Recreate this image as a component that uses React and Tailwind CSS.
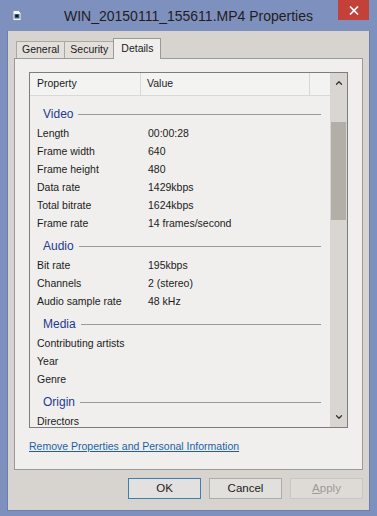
import { ChevronUp, ChevronDown } from "lucide-react";

const groups = [
  {
    name: "Video",
    rows: [
      ["Length", "00:00:28"],
      ["Frame width", "640"],
      ["Frame height", "480"],
      ["Data rate", "1429kbps"],
      ["Total bitrate", "1624kbps"],
      ["Frame rate", "14 frames/second"],
    ],
  },
  {
    name: "Audio",
    rows: [
      ["Bit rate", "195kbps"],
      ["Channels", "2 (stereo)"],
      ["Audio sample rate", "48 kHz"],
    ],
  },
  {
    name: "Media",
    rows: [
      ["Contributing artists", ""],
      ["Year", ""],
      ["Genre", ""],
    ],
  },
  {
    name: "Origin",
    rows: [["Directors", ""]],
  },
];

function FileIcon() {
  return (
    <svg width="10" height="11" viewBox="0 0 10 11">
      <path d="M1 0.5h5.5l2.5 2.5v7.5h-8z" fill="#f4f6f8" stroke="#8a96a8" strokeWidth="1" />
      <rect x="2.5" y="4" width="5" height="4.5" fill="#2b5d8c" />
      <rect x="3.5" y="5" width="2.5" height="2" fill="#111" />
    </svg>
  );
}

function Tab({ label, active }) {
  if (active) {
    return (
      <div className="h-[21px] -mb-px px-[7px] flex items-center bg-[#f0efed] border border-b-0 border-[#9a9a9a] relative z-10">
        {label}
      </div>
    );
  }
  return (
    <div className="h-[17px] px-[5px] flex items-center bg-[#e3e0dc] border border-b-0 border-[#a8a8a8] -mr-px">
      {label}
    </div>
  );
}

function Button({ children, variant }) {
  const cls =
    variant === "default"
      ? "border-[#3c7fb1] bg-[#e2e1df] text-[#1b1b1b]"
      : variant === "disabled"
      ? "border-[#c8c6c3] bg-[#dedbd7] text-[#9c9a97]"
      : "border-[#acacac] bg-[#e2e0dd] text-[#1b1b1b]";
  return (
    <div className={`w-[73px] h-[21px] border flex items-center justify-center text-[11.5px] ${cls}`}>
      {children}
    </div>
  );
}

export default function App() {
  return (
    <div
      className="w-[377px] h-[516px] bg-[#7e90bd] flex flex-col text-[10.5px] text-[#1b1b1b]"
      style={{ fontFamily: '"Liberation Sans", Arial, sans-serif' }}
    >
      {/* title bar */}
      <div className="h-[31px] flex relative">
        <div className="pl-[12px] pt-[10px]">
          <FileIcon />
        </div>
        <div className="absolute left-0 right-0 top-[6px] text-center text-[14px] text-[#1e1e1e]">
          WIN_20150111_155611.MP4 Properties
        </div>
        <div className="ml-auto mr-[8px] w-[31px] h-[20px] bg-[#c4413a] flex items-center justify-center text-white relative z-10">
          <svg width="10" height="9" viewBox="0 0 10 9">
            <path d="M1 0.5l8 8M9 0.5l-8 8" stroke="#fff" strokeWidth="1.7" />
          </svg>
        </div>
      </div>

      {/* client area */}
      <div className="flex-1 mx-[7px] mb-[5px] bg-[#d7d4d0] border-l border-r border-b border-[#6d7ea8] flex flex-col pt-[6px] px-[6px]">
        {/* tabs */}
        <div className="flex items-end pl-[2px] h-[21px]">
          <Tab label="General" />
          <Tab label="Security" />
          <Tab label="Details" active />
        </div>

        {/* panel */}
        <div className="h-[412px] bg-[#f0efed] border border-[#9a9a9a] flex flex-col px-[14px] pt-[13px]">
          <div className="h-[356px] border border-[#7d7d7d] flex overflow-hidden">
            <div className="flex-1 flex flex-col overflow-hidden">
              <div className="h-[23px] shrink-0 flex items-stretch bg-[#f3f3f2] border-b border-[#d8d8d8]">
                <div className="w-[111px] pl-[7px] flex items-center border-r border-[#d8d8d8]">Property</div>
                <div className="w-[169px] pl-[6px] flex items-center border-r border-[#d8d8d8]">Value</div>
                <div className="flex-1" />
              </div>
              <div className="pt-[5px]">
                {groups.map((g) => (
                  <div key={g.name}>
                    <div className="h-[24px] flex items-center pl-[13px] pr-[9px] gap-[5px] pt-[2px]">
                      <span className="text-[12px] text-[#1f3a8f]">{g.name}</span>
                      <div className="flex-1 h-px bg-[#9a9a9a] mt-px" />
                    </div>
                    {g.rows.map(([k, v]) => (
                      <div key={k} className="h-[18px] flex items-center">
                        <div className="w-[118px] pl-[7px]">{k}</div>
                        <div>{v}</div>
                      </div>
                    ))}
                  </div>
                ))}
              </div>
            </div>
            {/* scrollbar */}
            <div className="w-[17px] bg-[#d9d6d2] flex flex-col items-center">
              <div className="h-[17px] flex items-center justify-center mt-[1px]">
                <ChevronUp size={10} strokeWidth={3} color="#333" />
              </div>
              <div className="mt-[31px] w-[15px] h-[98px] bg-[#b4aea8]" />
              <div className="flex-1" />
              <div className="h-[17px] flex items-center justify-center mb-[2px]">
                <ChevronDown size={10} strokeWidth={3} color="#333" />
              </div>
            </div>
          </div>
          <div className="mt-[11px] text-[10.5px] text-[#1c5fa6] underline">
            Remove Properties and Personal Information
          </div>
        </div>

        {/* buttons */}
        <div className="flex justify-end gap-[8px] mt-[8px]">
          <Button variant="default">OK</Button>
          <Button>Cancel</Button>
          <Button variant="disabled">
            <span className="underline">A</span>pply
          </Button>
        </div>
      </div>
    </div>
  );
}
